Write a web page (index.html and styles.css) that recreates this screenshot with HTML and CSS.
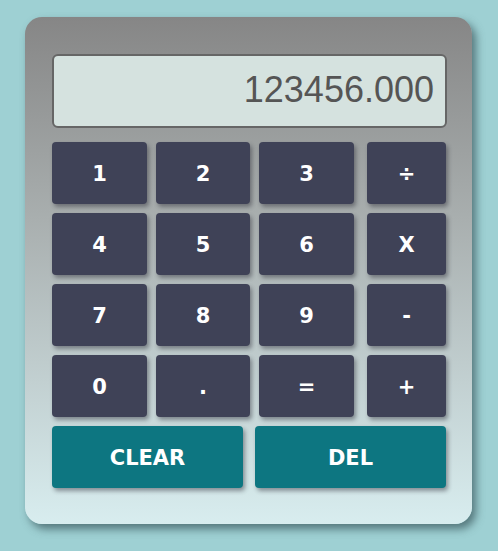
FILE: index.html
```html
<!DOCTYPE html>
<html>
<head>
<meta charset="utf-8">
<link rel="stylesheet" href="styles.css">
</head>
<body>
<div class="calc">
  <div class="display">123456.000</div>
  <div class="keys">
    <button class="key">1</button>
    <button class="key">2</button>
    <button class="key">3</button>
    <button class="key op">÷</button>
    <button class="key">4</button>
    <button class="key">5</button>
    <button class="key">6</button>
    <button class="key op">X</button>
    <button class="key">7</button>
    <button class="key">8</button>
    <button class="key">9</button>
    <button class="key op">-</button>
    <button class="key">0</button>
    <button class="key">.</button>
    <button class="key">=</button>
    <button class="key op">+</button>
  </div>
  <div class="actions">
    <button class="key action">CLEAR</button>
    <button class="key action">DEL</button>
  </div>
</div>
</body>
</html>
```
FILE: styles.css
```css
html, body {
  margin: 0;
  padding: 0;
}
body {
  background: #9ed0d3;
  width: 498px;
  height: 551px;
  padding: 17px 0 0 25px;
  box-sizing: border-box;
}
.calc {
  width: 447px;
  height: 507px;
  box-sizing: border-box;
  padding: 37px 26px 0 27px;
  border-radius: 17px;
  background: linear-gradient(to bottom, #868686 0%, #a9afaf 40%, #d8edef 100%);
  box-shadow: 4px 5px 8px rgba(60, 90, 95, 0.75);
}
.display {
  height: 74px;
  box-sizing: border-box;
  border: 2px solid #666;
  border-radius: 6px;
  background: #d5e2df;
  font-family: "Liberation Sans", Arial, sans-serif;
  font-size: 36px;
  color: #555;
  text-align: right;
  padding: 0 11px 0 0;
  line-height: 68px;
  margin-right: -1px;
}
.keys {
  margin-top: 14px;
  display: grid;
  grid-template-columns: 95px 94px 95px 83px;
  grid-auto-rows: 62px;
  column-gap: 9px;
  row-gap: 9px;
}
.key {
  border: none;
  margin: 0;
  padding: 2px 0 0 0;
  border-radius: 4px;
  background: #3f4257;
  color: #fff;
  font-family: "DejaVu Sans", Verdana, sans-serif;
  font-weight: bold;
  font-size: 21px;
  box-shadow: 2px 3px 4px rgba(40, 40, 50, 0.45);
}
.op {
  width: 79px;
  justify-self: end;
}
.actions {
  margin-top: 9px;
  display: grid;
  grid-template-columns: 191px 191px;
  column-gap: 12px;
}
.action {
  height: 62px;
  background: #0d7681;
}
```
